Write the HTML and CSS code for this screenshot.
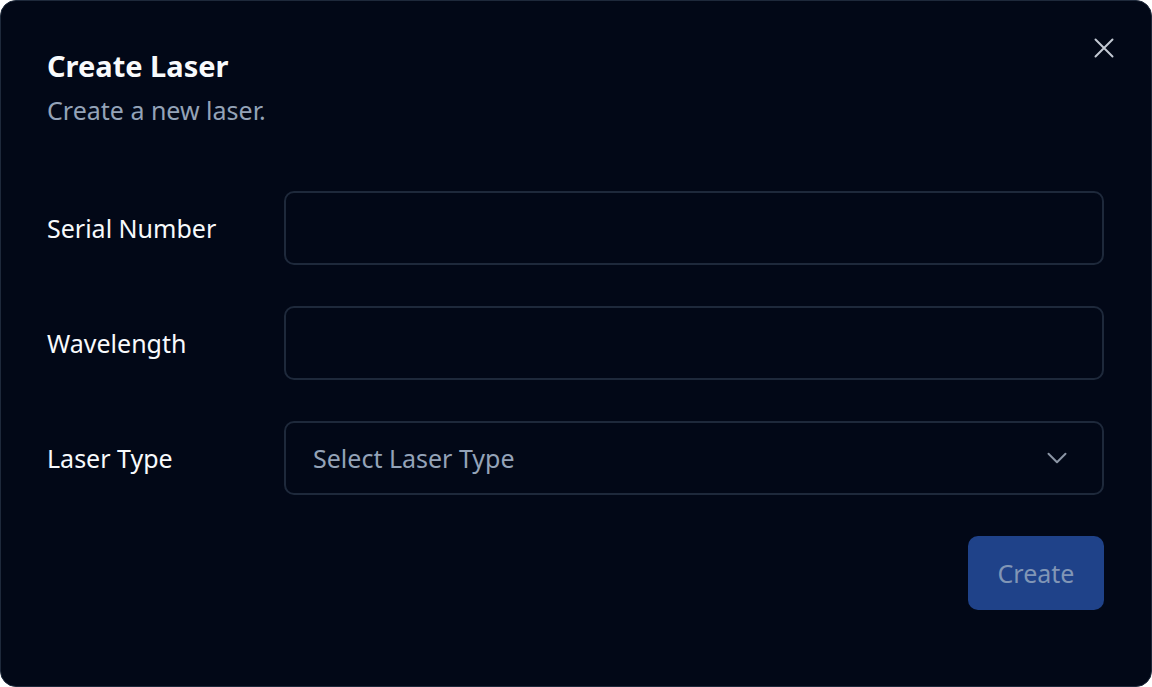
FILE: index.html
```html
<!DOCTYPE html>
<html lang="en">
<head>
  <meta charset="UTF-8" />
  <meta name="viewport" content="width=device-width, initial-scale=1.0" />
  <title>Create Laser</title>
  <link rel="stylesheet" href="styles.css">
</head>
<body>
  <div class="dialog">
    <button class="close-btn" title="Close">
      <svg width="34" height="34" viewBox="0 0 24 24" fill="none" stroke="currentColor" stroke-width="1.4" stroke-linecap="round">
        <path d="M18 6 6 18M6 6l12 12"/>
      </svg>
    </button>
    <div class="dialog-header">
      <h2>Create Laser</h2>
      <p>Create a new laser.</p>
    </div>
    <form class="laser-form">
      <label for="serial">Serial Number</label>
      <input id="serial" type="text" />

      <label for="wavelength">Wavelength</label>
      <input id="wavelength" type="text" />

      <label for="type">Laser Type</label>
      <div class="select" id="type">
        <span>Select Laser Type</span>
        <svg width="34" height="34" viewBox="0 0 24 24" fill="none" stroke="currentColor" stroke-width="1.4" stroke-linecap="round" stroke-linejoin="round">
          <path d="m6 9 6 6 6-6"/>
        </svg>
      </div>

      <div class="actions">
        <button type="button" class="create-btn" disabled>Create</button>
      </div>
    </form>
  </div>
</body>
</html>
```

FILE: styles.css
```css
:root {
  --background: #020817;
  --border: #1e293b;
  --text: #f8fafc;
  --muted: #94a3b8;
}

* {
  box-sizing: border-box;
}

body {
  margin: 0;
  background: #ffffff;
  font-family: 'Noto Sans', sans-serif;
}

.dialog {
  position: relative;
  height: 687px;
  background: var(--background);
  border: 1px solid var(--border);
  border-radius: 16px;
  padding: 46px 47px 0 46px;
  color: var(--text);
}

.close-btn {
  position: absolute;
  top: 30px;
  right: 30px;
  background: none;
  border: none;
  color: #c3c9d3;
  padding: 0;
  display: flex;
  cursor: pointer;
}

.dialog-header h2 {
  margin: 0;
  font-size: 29px;
  line-height: 38px;
  font-weight: 700;
}

.dialog-header p {
  margin: 9px 0 0;
  font-size: 25px;
  line-height: 32px;
  color: var(--muted);
}

.laser-form {
  margin-top: 65px;
  display: grid;
  grid-template-columns: 237px 1fr;
  row-gap: 41px;
  align-items: center;
}

.laser-form label {
  font-size: 25px;
}

.laser-form input,
.select {
  height: 74px;
  background: transparent;
  border: 2px solid var(--border);
  border-radius: 10px;
  color: var(--text);
  font: inherit;
}

.select {
  display: flex;
  align-items: center;
  justify-content: space-between;
  padding: 0 28px 0 27px;
  font-size: 25px;
  color: var(--muted);
}

.select svg {
  color: #8b95a5;
}

.actions {
  grid-column: 1 / -1;
  display: flex;
  justify-content: flex-end;
}

.create-btn {
  width: 136px;
  height: 74px;
  background: #1f4289;
  color: #8196b6;
  border: none;
  border-radius: 10px;
  font-family: inherit;
  font-size: 25px;
}
```
